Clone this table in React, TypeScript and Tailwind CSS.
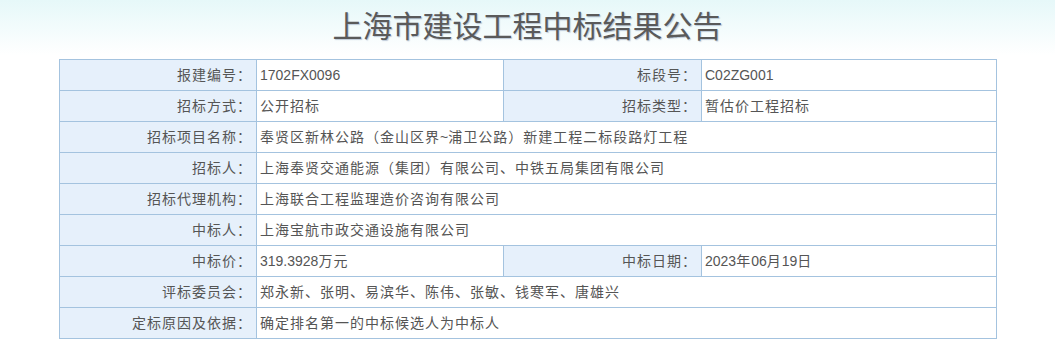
import React from "react";

const L = "bg-[#e6f0fb] text-right pr-[4px] border border-[#a4c3df] text-[#555]";
const V = "bg-white text-left pl-[3px] border border-[#a4c3df] text-[#555]";

function T({ s }: { s: string }) {
  const parts = s.match(/[\u3000-\u9fff\uff00-\uffef]+|[^\u3000-\u9fff\uff00-\uffef]+/g) || [];
  return (
    <>
      {parts.map((p, i) =>
        /[\u3000-\u9fff\uff00-\uffef]/.test(p) ? (
          <span key={i} className="tracking-[1px]">
            {p}
          </span>
        ) : (
          <span key={i}>{p}</span>
        )
      )}
    </>
  );
}

export default function App() {
  const rows: Array<[string, string, string?, string?]> = [
    ["报建编号：", "1702FX0096", "标段号：", "C02ZG001"],
    ["招标方式：", "公开招标", "招标类型：", "暂估价工程招标"],
    ["招标项目名称：", "奉贤区新林公路（金山区界~浦卫公路）新建工程二标段路灯工程"],
    ["招标人：", "上海奉贤交通能源（集团）有限公司、中铁五局集团有限公司"],
    ["招标代理机构：", "上海联合工程监理造价咨询有限公司"],
    ["中标人：", "上海宝航市政交通设施有限公司"],
    ["中标价：", "319.3928万元", "中标日期：", "2023年06月19日"],
    ["评标委员会：", "郑永新、张明、易滨华、陈伟、张敏、钱寒军、唐雄兴"],
    ["定标原因及依据：", "确定排名第一的中标候选人为中标人"],
  ];
  return (
    <div
      className="w-[1055px] h-[363px] bg-[linear-gradient(to_bottom,#e6f8f9_0px,#ffffff_55px)]"
      style={{ fontFamily: '"Liberation Sans", "Noto Sans CJK SC", sans-serif' }}
    >
      <div className="h-[59px] flex items-start justify-center pt-[6px]">
        <h1
          className="text-[30px] leading-[36px] text-[#5a5a5a] tracking-[0px] [text-shadow:1px_1px_1px_rgba(120,140,170,0.45)]"
          style={{ fontFamily: '"Noto Sans CJK SC", sans-serif' }}
        >
          上海市建设工程中标结果公告
        </h1>
      </div>
      <div className="pl-[59px]">
        <table className="table-fixed border-collapse w-[937px] text-[14px]">
          <colgroup>
            <col className="w-[197px]" />
            <col className="w-[247px]" />
            <col className="w-[198px]" />
            <col className="w-[295px]" />
          </colgroup>
          <tbody>
            {rows.map((r, i) => (
              <tr key={i} className="h-[31px]">
                <td className={L}>
                  <T s={r[0]} />
                </td>
                {r.length > 2 ? (
                  <>
                    <td className={V}>
                      <T s={r[1]} />
                    </td>
                    <td className={L}>
                      <T s={r[2] as string} />
                    </td>
                    <td className={V}>
                      <T s={r[3] as string} />
                    </td>
                  </>
                ) : (
                  <td className={V} colSpan={3}>
                    <T s={r[1]} />
                  </td>
                )}
              </tr>
            ))}
          </tbody>
        </table>
      </div>
    </div>
  );
}
